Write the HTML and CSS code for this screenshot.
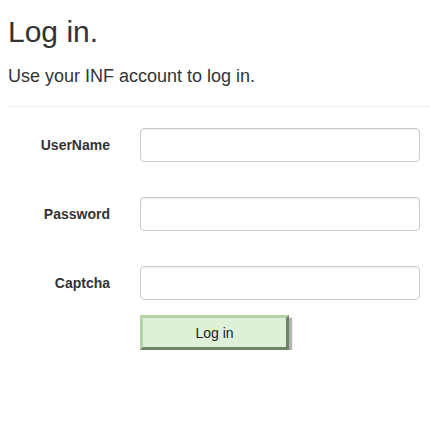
FILE: index.html
```html
<!DOCTYPE html>
<html>
<head>
<meta charset="utf-8">
<link rel="stylesheet" href="styles.css">
</head>
<body>
<div class="page">
  <h2 class="title">Log in.</h2>
  <h4 class="subtitle">Use your INF account to log in.</h4>
  <hr class="rule">
  <form class="login-form">
    <div class="form-group spaced">
      <label class="control-label" for="u">UserName</label>
      <input class="form-control" id="u" type="text">
    </div>
    <div class="form-group spaced">
      <label class="control-label" for="p">Password</label>
      <input class="form-control" id="p" type="password">
    </div>
    <div class="form-group">
      <label class="control-label" for="c">Captcha</label>
      <input class="form-control" id="c" type="text">
    </div>
    <div class="form-actions">
      <button type="button" class="btn-login">Log in</button>
    </div>
  </form>
</div>
</body>
</html>
```

FILE: styles.css
```css
* { box-sizing: border-box; }
html, body {
  margin: 0;
  padding: 0;
  background: #fff;
}
body {
  font-family: "Liberation Sans", Arial, Helvetica, sans-serif;
  font-size: 14px;
  line-height: 20px;
  color: #333;
}
.page {
  padding: 15px 0 0 8px;
}
.title {
  margin: 0;
  font-size: 30px;
  line-height: 33px;
  font-weight: 500;
  color: #333;
}
.subtitle {
  margin: 18px 0 0 0;
  font-size: 18px;
  line-height: 20px;
  font-weight: 500;
  color: #333;
}
.rule {
  margin: 20px 0 0 0;
  border: 0;
  border-top: 1px solid #eee;
  height: 0;
}
.login-form {
  padding-top: 21px;
}
.form-group {
  display: grid;
  grid-template-columns: 102px 280px;
  column-gap: 30px;
  align-items: start;
}
.form-group.spaced {
  margin-bottom: 35px;
}
.control-label {
  padding-top: 7px;
  text-align: right;
  font-weight: bold;
  font-size: 14px;
  line-height: 20px;
  color: #333;
}
.form-control {
  display: block;
  width: 280px;
  height: 34px;
  margin: 0;
  padding: 6px 12px;
  font-family: inherit;
  font-size: 14px;
  color: #555;
  background: #fff;
  border: 1px solid #ccc;
  border-radius: 4px;
  box-shadow: inset 0 1px 1px rgba(0,0,0,.075);
}
.form-actions {
  padding-left: 132px;
  margin-top: 15px;
}
.btn-login {
  display: block;
  width: 149px;
  height: 35px;
  margin: 0;
  padding: 0;
  font-family: inherit;
  font-size: 14px;
  color: #222;
  background: #dff0d8;
  border-style: solid;
  border-width: 3px;
  border-color: #b3d4a6 #6e8466 #6e8466 #b3d4a6;
  box-shadow: 3px 3px 1px #b3b3b3;
}
```
